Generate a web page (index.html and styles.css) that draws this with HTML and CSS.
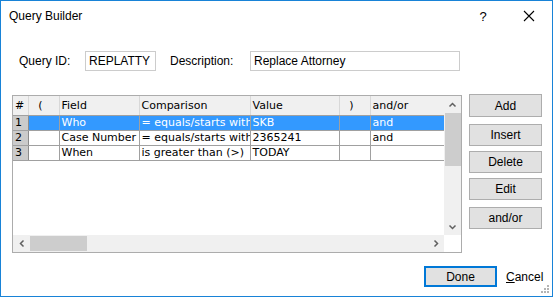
FILE: index.html
```html
<!DOCTYPE html>
<html lang="en">
<head>
    <meta charset="UTF-8">
    <title>Query Builder</title>
    <link rel="stylesheet" href="styles.css">
</head>
<body>
<div class="window">

    <!-- Title bar -->
    <div class="titlebar">
        <span class="title">Query Builder</span>
        <span class="caption-btn">?</span>
        <span class="caption-btn">
            <svg width="12" height="12" viewBox="0 0 12 12"><path d="M1 1 L11 11 M11 1 L1 11" stroke="#000" stroke-width="1.1" fill="none"/></svg>
        </span>
    </div>

    <!-- Query header fields -->
    <div class="fields">
        <label class="label-id">Query ID:</label>
        <div class="textbox id-box">REPLATTY</div>
        <label class="label-desc">Description:</label>
        <div class="textbox desc-box">Replace Attorney</div>
    </div>

    <div class="main">
        <div class="grid-box">
            <div class="grid-body">
                <table class="query-grid">
                    <colgroup>
                        <col style="width:15px">
                        <col style="width:31px">
                        <col style="width:80px">
                        <col style="width:111px">
                        <col style="width:89px">
                        <col style="width:31px">
                        <col style="width:74px">
                    </colgroup>
                    <thead>
                        <tr>
                            <th>#</th><th class="paren">(</th><th>Field</th><th>Comparison</th><th>Value</th><th class="paren">)</th><th>and/or</th>
                        </tr>
                    </thead>
                    <tbody>
                        <tr class="selected">
                            <td class="num">1</td><td></td><td>Who</td><td>= equals/starts with</td><td>SKB</td><td></td><td>and</td>
                        </tr>
                        <tr>
                            <td class="num">2</td><td></td><td>Case Number</td><td>= equals/starts with</td><td>2365241</td><td></td><td>and</td>
                        </tr>
                        <tr>
                            <td class="num">3</td><td></td><td>When</td><td>is greater than (&gt;)</td><td>TODAY</td><td></td><td></td>
                        </tr>
                    </tbody>
                </table>
            </div>

            <!-- Vertical scrollbar -->
            <div class="vscroll">
                <div class="arrow">
                    <svg width="9" height="6" viewBox="0 0 9 6"><path d="M1.5 4.5 L4.5 1.5 L7.5 4.5" stroke="#606060" stroke-width="1.5" fill="none"/></svg>
                </div>
                <div class="vthumb"></div>
                <div class="vspace"></div>
                <div class="arrow">
                    <svg width="9" height="6" viewBox="0 0 9 6"><path d="M1.5 1.5 L4.5 4.5 L7.5 1.5" stroke="#606060" stroke-width="1.5" fill="none"/></svg>
                </div>
            </div>

            <!-- Horizontal scrollbar -->
            <div class="hscroll">
                <div class="harrow">
                    <svg width="6" height="9" viewBox="0 0 6 9"><path d="M4.5 1.5 L1.5 4.5 L4.5 7.5" stroke="#606060" stroke-width="1.5" fill="none"/></svg>
                </div>
                <div class="hthumb"></div>
                <div class="hspace"></div>
                <div class="harrow">
                    <svg width="6" height="9" viewBox="0 0 6 9"><path d="M1.5 1.5 L4.5 4.5 L1.5 7.5" stroke="#606060" stroke-width="1.5" fill="none"/></svg>
                </div>
            </div>
            <div class="corner"></div>
        </div>

        <!-- Side buttons -->
        <div class="side-buttons">
            <button class="btn btn-add">Add</button>
            <button class="btn btn-gap7">Insert</button>
            <button class="btn btn-gap5">Delete</button>
            <button class="btn btn-gap5">Edit</button>
            <button class="btn btn-gap7">and/or</button>
        </div>
    </div>

    <div class="footer">
        <button class="btn btn-done">Done</button>
        <span class="cancel"><u>C</u>ancel</span>
    </div>

    <svg class="grip" width="8" height="8" viewBox="0 0 8 8" fill="#b4b4b4">
        <rect x="6" y="0" width="2" height="2"/>
        <rect x="3" y="3" width="2" height="2"/><rect x="6" y="3" width="2" height="2"/>
        <rect x="0" y="6" width="2" height="2"/><rect x="3" y="6" width="2" height="2"/><rect x="6" y="6" width="2" height="2"/>
    </svg>
</div>
</body>
</html>
```

FILE: styles.css
```css
/* Page */
body {
    margin: 0;
    padding: 0;
    background-color: #ffffff;
    font-family: 'Liberation Sans', Arial, sans-serif;
    font-size: 12px;
    color: #000;
}

/* Dialog window */
.window {
    position: relative;
    width: 553px;
    height: 297px;
    box-sizing: border-box;
    border: 1px solid #1883d7;
    background-color: #ffffff;
}

/* Title bar */
.titlebar {
    display: flex;
    align-items: center;
    height: 30px;
    padding-left: 8px;
}

.title {
    flex: 1;
    font-size: 12px;
    margin-top: -1px;
}

.caption-btn {
    width: 46px;
    height: 30px;
    display: flex;
    align-items: center;
    justify-content: center;
    font-size: 13px;
}

/* Query fields */
.fields {
    display: flex;
    align-items: center;
    margin-top: 20px;
    padding-left: 18px;
    height: 20px;
}

.label-id {
    width: 66px;
}

.label-desc {
    width: 80px;
    margin-left: 14px;
}

.textbox {
    height: 20px;
    box-sizing: border-box;
    border: 1px solid #cccccc;
    padding-left: 3px;
    line-height: 18px;
}

.id-box {
    width: 71px;
}

.desc-box {
    width: 210px;
}

/* Grid and buttons */
.main {
    display: flex;
    align-items: flex-start;
    margin-top: 23px;
    padding-left: 11px;
}

.grid-box {
    margin-top: 1px;
    width: 450px;
    height: 158px;
    box-sizing: border-box;
    border: 1px solid #acacac;
    display: grid;
    grid-template-columns: 431px 17px;
    grid-template-rows: 139px 17px;
    background-color: #ffffff;
}

.grid-body {
    overflow: hidden;
}

.query-grid {
    table-layout: fixed;
    border-collapse: collapse;
    width: 431px;
    font-family: 'DejaVu Sans', Verdana, sans-serif;
    font-size: 11px;
}

.query-grid th,
.query-grid td {
    white-space: nowrap;
    overflow: hidden;
    padding: 0 0 0 2px;
    text-align: left;
    font-weight: normal;
}

.query-grid th {
    height: 19px;
    background-color: #f0f0f0;
    border-right: 1px solid #d8d8d8;
    border-bottom: 1px solid #a0a0a0;
}

.query-grid th.paren {
    text-align: center;
    padding: 0 6px 0 0;
}

.query-grid td {
    height: 14px;
    line-height: 14px;
    border-right: 1px solid #a0a0a0;
    border-bottom: 1px solid #a0a0a0;
}

.query-grid td.num {
    background-color: #cbcbcb;
    border-right: 1px solid #8c8c8c;
}

.query-grid tr.selected td {
    background-color: #3399ff;
    color: #ffffff;
}

.query-grid tr.selected td.num {
    background-color: #cbcbcb;
    color: #000;
}

/* Scrollbars */
.vscroll {
    background-color: #f0f0f0;
    display: flex;
    flex-direction: column;
}

.arrow {
    height: 17px;
    display: flex;
    align-items: center;
    justify-content: center;
}

.vthumb {
    height: 53px;
    margin-left: 1px;
    background-color: #cdcdcd;
}

.vspace {
    flex: 1;
}

.hscroll {
    background-color: #f0f0f0;
    display: flex;
    align-items: stretch;
}

.harrow {
    width: 17px;
    display: flex;
    align-items: center;
    justify-content: center;
}

.hthumb {
    width: 57px;
    margin: 1px 0;
    background-color: #cdcdcd;
}

.hspace {
    flex: 1;
}

.corner {
    background-color: #ffffff;
}

/* Buttons */
.side-buttons {
    display: flex;
    flex-direction: column;
    margin-left: 7px;
}

.btn {
    width: 73px;
    height: 22px;
    padding: 0;
    box-sizing: border-box;
    background-color: #e1e1e1;
    border: 1px solid #adadad;
    font-family: 'Liberation Sans', Arial, sans-serif;
    font-size: 12px;
    color: #000;
}

.btn-add {
    height: 23px;
}

.btn-gap7 {
    margin-top: 7px;
}

.btn-gap5 {
    margin-top: 5px;
}

/* Footer */
.footer {
    display: flex;
    align-items: center;
    justify-content: flex-end;
    margin-top: 13px;
}

.btn-done {
    height: 21px;
    border: 2px solid #0078d7;
}

.cancel {
    width: 37px;
    margin-left: 9px;
    padding-right: 9px;
}

.grip {
    position: absolute;
    right: 3px;
    bottom: 3px;
}
```
